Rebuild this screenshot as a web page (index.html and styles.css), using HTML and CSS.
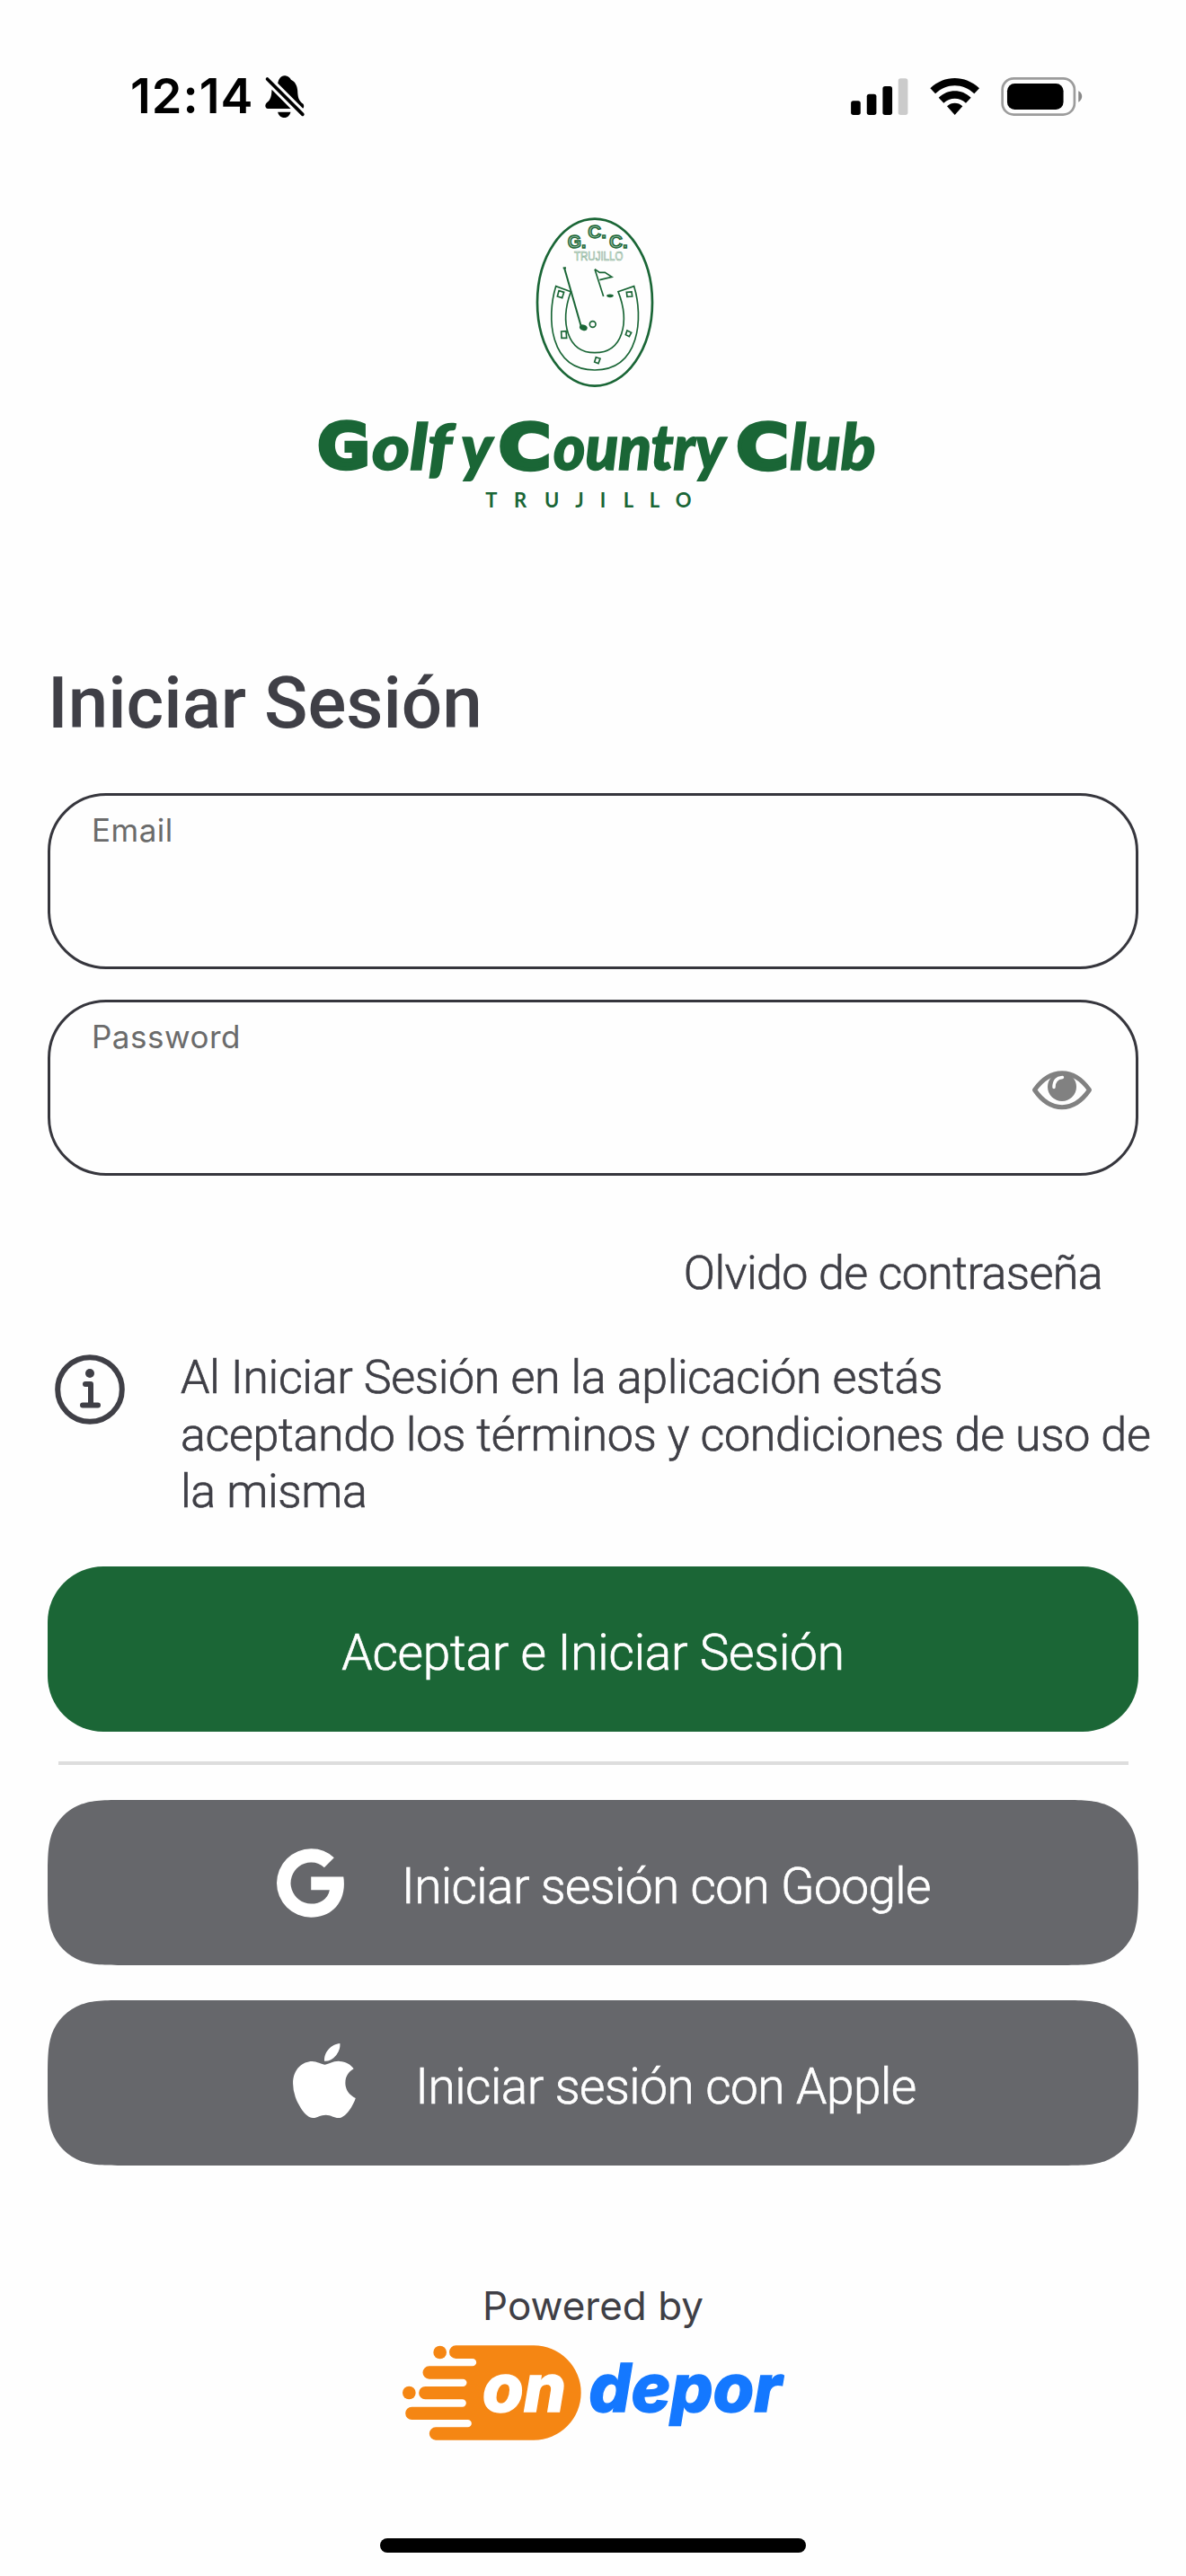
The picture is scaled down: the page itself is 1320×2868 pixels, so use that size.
FILE: index.html
```html
<!DOCTYPE html>
<html lang="es">
  <head>
    <meta charset="UTF-8" />
    <meta name="viewport" content="width=device-width, initial-scale=1.0" />
    <title>Golf y Country Club Trujillo</title>
    <link rel="stylesheet" href="styles.css">
  </head>
  <body>
    <div class="status-bar">
      <div class="status-left">
        <span class="time">12:14</span>
        <svg class="bell" viewBox="525 72 131 141">
          <path d="M567 98C570 84 577 73 589 73C601 73 607 80 611 86C625 92 632 107 633 122C634 147 637 156 652 167C655 172 655 178 651 182Z" />
          <path d="M547 119L610 183H534C523 181 523 168 532 161C543 153 546 141 547 119Z" />
          <path d="M567 194H610C607 205 600 213 589 213C577 213 569 205 567 194Z" />
          <path class="bell-slash" d="M532 84L650 202" />
        </svg>
      </div>
      <svg class="status-icons" viewBox="80 72 774 133">
        <rect x="80" y="154" width="32" height="47" rx="8" />
        <rect x="133" y="131" width="32" height="70" rx="8" />
        <rect x="186" y="105" width="32" height="96" rx="8" />
        <rect x="238" y="79" width="32" height="122" rx="8" fill="#cbcbcb" />
        <path d="M345 112C392 67 461 67 509 112L492 130C454 94 400 94 362 130Z" />
        <path d="M373 143C404 113 450 113 481 143L464 161C443 141 411 141 390 161Z" />
        <path d="M401 172C416 158 438 158 453 172L427 201Z" />
        <rect x="586" y="79" width="241" height="121" rx="38" fill="none" stroke="#9c9c9c" stroke-width="8" />
        <rect x="602" y="96" width="188" height="87" rx="25" />
        <path d="M840 121C856 128 856 150 840 158Z" fill="#888" />
      </svg>
    </div>

    <div class="club-logo">
      <svg class="emblem" viewBox="48 36 396 570">
        <ellipse cx="246" cy="320" rx="192" ry="279" stroke-width="8" />
        <g class="emblem-letters">
          <text x="155" y="139" textLength="62" lengthAdjust="spacingAndGlyphs">G.</text>
          <text x="223" y="106" textLength="62" lengthAdjust="spacingAndGlyphs">C.</text>
          <text x="294" y="139" textLength="62" lengthAdjust="spacingAndGlyphs">C.</text>
        </g>
        <text class="emblem-name" x="177" y="181" textLength="163" lengthAdjust="spacingAndGlyphs">TRUJILLO</text>
        <path d="M166 284L116 266C84 370 94 546 246 546C397 546 409 370 377 266L324 284C364 386 340 488 246 488C153 488 129 386 166 284Z" />
        <path d="M126 281L143 286L137 305L121 300ZM352 286L369 285L371 300L354 301ZM134 417L150 416L152 439L135 439ZM354 414L368 421L361 434L349 428ZM250 503L264 508L258 524L245 519Z" />
        <path d="M144 204L200 399" stroke-width="6" />
        <path d="M140 205H150" stroke-width="6" />
        <ellipse cx="208" cy="404" rx="11" ry="7" transform="rotate(20 208 404)" fill="#1a6636" />
        <circle cx="239" cy="393" r="10" stroke-width="5" />
        <path d="M246 209L275 300M246 209L262 220H280L303 235L262 245" stroke-width="5" />
        <ellipse cx="297" cy="298" rx="9" ry="3" fill="#1a6636" />
      </svg>
      <svg class="wordmark" viewBox="42 42 1866 312">
        <g class="caps">
          <text x="40" y="212" textLength="176" lengthAdjust="spacingAndGlyphs">G</text>
          <text x="644" y="216" textLength="176" lengthAdjust="spacingAndGlyphs">C</text>
          <text x="1438" y="216" textLength="176" lengthAdjust="spacingAndGlyphs">C</text>
        </g>
        <g class="script">
          <text x="222" y="218" textLength="266" lengthAdjust="spacingAndGlyphs">olf</text>
          <text x="520" y="218" textLength="104" lengthAdjust="spacingAndGlyphs">y</text>
          <text x="828" y="218" textLength="574" lengthAdjust="spacingAndGlyphs">ountry</text>
          <text x="1618" y="218" textLength="286" lengthAdjust="spacingAndGlyphs">lub</text>
        </g>
        <text class="city" x="601 696 798 901 983 1061 1148 1235" y="346">TRUJILLO</text>
      </svg>
    </div>

    <form class="login" onsubmit="return false">
      <h1>Iniciar Sesión</h1>

      <div class="field">
        <label>Email</label>
      </div>
      <div class="field">
        <label>Password</label>
        <svg class="eye" viewBox="0 0 66 43">
          <path d="M2.5 21.5C20 -3.5 46 -3.5 63.5 21.5C46 47 20 47 2.5 21.5Z" fill="none" stroke="#818181" stroke-width="5" stroke-linejoin="round" />
          <circle cx="33" cy="18" r="16" fill="#818181" />
          <path d="M24 18.5C24 11.5 27 8 33.5 7.5" fill="none" stroke="#fff" stroke-width="3.4" stroke-linecap="round" />
        </svg>
      </div>

      <a class="forgot">Olvido de contraseña</a>

      <div class="terms">
        <svg class="info" viewBox="0 0 78 78">
          <circle cx="39" cy="39" r="35.8" />
          <circle cx="39" cy="21" r="5" class="dot" />
          <path d="M34 33H40V56M31 56.5H48" />
        </svg>
        <p>
          Al Iniciar Sesión en la aplicación estás<br />
          aceptando los términos y condiciones de uso de<br />
          la misma
        </p>
      </div>

      <button class="btn accept">Aceptar e Iniciar Sesión</button>
      <hr />
      <button class="btn social google">
        <svg class="google-icon" viewBox="0 0 15.7 16">
          <path d="M15.545 6.558a9.4 9.4 0 0 1 .139 1.626c0 2.434-.87 4.492-2.384 5.885h.002C11.978 15.292 10.158 16 8 16A8 8 0 1 1 8 0a7.7 7.7 0 0 1 5.352 2.082l-2.284 2.284A4.35 4.35 0 0 0 8 3.166c-2.087 0-3.86 1.408-4.492 3.304a4.8 4.8 0 0 0 0 3.063h.003c.635 1.893 2.405 3.301 4.492 3.301 1.078 0 2.004-.276 2.722-.764h-.003a3.7 3.7 0 0 0 1.599-2.431H8v-3.08z" />
        </svg>
        <span>Iniciar sesión con Google</span>
      </button>
      <button class="btn social apple">
        <svg class="apple-icon" viewBox="4 32 377 448">
          <path d="M318.7 268.7c-.2-36.7 16.4-64.4 50-84.8-18.8-26.9-47.2-41.7-84.7-44.6-35.5-2.8-74.3 20.7-88.5 20.7-15 0-49.4-19.7-76.4-19.7C63.3 141.2 4 184.8 4 273.5q0 39.3 14.4 81.2c12.8 36.7 59 126.7 107.2 125.2 25.2-.6 43-17.9 75.8-17.9 31.8 0 48.3 17.9 76.4 17.9 48.6-.7 90.4-82.5 102.6-119.3-65.2-30.7-61.7-90-61.7-91.9zm-56.6-164.2c27.3-32.4 24.8-61.9 24-72.5-24.1 1.4-52 16.4-67.9 34.9-17.5 19.8-27.8 44.3-25.6 71.9 26.1 2 49.9-11.4 69.5-34.3z" />
        </svg>
        <span>Iniciar sesión con Apple</span>
      </button>
    </form>

    <div class="powered">
      <p>Powered by</p>
      <svg class="ondepor" viewBox="84 273 1272 318">
        <path fill="#f58613" d="M262 274H522A158 158 0 0 1 522 590H195A21 21 0 0 1 195 547H302A12.5 12.5 0 0 0 302 522H115A21 21 0 0 1 115 479H284A12.5 12.5 0 0 0 284 454H160A21 21 0 0 1 160 411H286A12.5 12.5 0 0 0 286 386H173A21 21 0 0 1 173 343H318A12.5 12.5 0 0 0 318 318H262A21 21 0 0 1 262 274Z" />
        <circle cx="209" cy="297" r="22" fill="#f58613" />
        <circle cx="106" cy="432" r="22" fill="#f58613" />
        <text x="350" y="494" fill="#fff" stroke="#fff" textLength="280" lengthAdjust="spacingAndGlyphs">on</text>
        <text x="706" y="494" fill="#1478ff" stroke="#1478ff" textLength="645" lengthAdjust="spacingAndGlyphs">depor</text>
      </svg>
    </div>

    <div class="home-indicator"></div>
  </body>
</html>
```

FILE: styles.css
```css
body {
  margin: 0;
  width: 1320px;
  height: 2868px;
  background-color: #fefefe;
  color: #3f3f46;
  font-family: Roboto, sans-serif;
  display: flex;
  flex-direction: column;
  overflow: hidden;
}

svg {
  display: block;
  flex: none;
  overflow: visible;
}

.status-bar {
  height: 214px;
  box-sizing: border-box;
  padding: 0 115px 0 145px;
  display: flex;
  align-items: center;
  justify-content: space-between;
}

.status-left {
  display: flex;
  align-items: center;
  gap: 12px;
  color: #000;
}

.time {
  font-family: Inter, sans-serif;
  font-weight: 600;
  font-size: 54px;
  line-height: 60px;
  letter-spacing: 1px;
}

.bell {
  width: 44px;
  height: 47px;
}

.bell-slash {
  fill: none;
  stroke: #000;
  stroke-width: 11;
  stroke-linecap: round;
}

.status-icons {
  width: 258px;
  height: 44.3px;
}

/* club logo */
.club-logo {
  height: 326px;
  padding: 28px 0 0 4px;
  display: flex;
  flex-direction: column;
  align-items: center;
  gap: 32px;
}

.emblem {
  width: 132px;
  height: 190px;
  fill: none;
  stroke: #1a6636;
  stroke-width: 5;
}

.emblem-letters {
  font-family: "Liberation Sans", sans-serif;
  font-weight: bold;
  font-size: 62px;
  fill: #8fb59d;
  stroke-width: 4;
}

.emblem-name {
  font-family: "Liberation Sans", sans-serif;
  font-size: 42px;
  stroke: #7fab8f;
  stroke-width: 2;
}

.wordmark {
  width: 622px;
  height: 104px;
  margin-left: 6px;
  fill: #1a6636;
}

.caps {
  font-family: "DejaVu Sans", sans-serif;
  font-weight: bold;
  font-size: 210px;
  stroke: #1a6636;
  stroke-width: 13;
}

.script {
  font-family: Lato, sans-serif;
  font-weight: 900;
  font-style: italic;
  font-size: 212px;
  stroke: #1a6636;
  stroke-width: 5;
}

.city {
  font-family: Lato, sans-serif;
  font-weight: bold;
  font-size: 66px;
}

/* login form */
.login {
  padding: 167px 53px 0;
  display: flex;
  flex-direction: column;
}

h1 {
  margin: 0 0 52px;
  font-size: 80px;
  line-height: 96px;
  font-weight: 500;
  white-space: nowrap;
}

.field {
  box-sizing: border-box;
  height: 196px;
  margin-bottom: 34px;
  padding: 17px 49px 0 46px;
  border: 3px solid #36363d;
  border-radius: 65px;
  display: flex;
  justify-content: space-between;
}

.field label {
  font-family: Inter, sans-serif;
  font-size: 35px;
  line-height: 42px;
  letter-spacing: 0.5px;
  color: #6b6b6b;
}

.eye {
  width: 66px;
  height: 43px;
  margin-top: 59px;
}

/* light weight, slightly thickened */
.forgot,
.terms p,
.btn {
  font-weight: 300;
  -webkit-text-stroke: 0.7px currentColor;
}

.forgot {
  align-self: flex-end;
  margin: 43px 40px 0 0;
  font-size: 52px;
  line-height: 64px;
  letter-spacing: -0.6px;
}

.terms {
  display: flex;
  align-items: flex-start;
  gap: 62px;
  margin: 52px -53px 0 8px;
}

.info {
  width: 78px;
  height: 78px;
  margin-top: 6px;
  fill: none;
  stroke: #3f3f46;
  stroke-width: 6;
  stroke-linecap: round;
  stroke-linejoin: round;
}

.info .dot {
  fill: #3f3f46;
  stroke: none;
}

.terms p {
  margin: 0;
  font-size: 52px;
  line-height: 63.5px;
  letter-spacing: -0.35px;
  white-space: nowrap;
}

.btn {
  height: 184px;
  border: 0;
  padding: 8px 0 0;
  color: #fff;
  font-family: Roboto, sans-serif;
  font-size: 55px;
  letter-spacing: -0.2px;
  display: flex;
  align-items: center;
  justify-content: center;
}

.accept {
  margin-top: 51.5px;
  border-radius: 62px;
  background-color: #1b6636;
}

hr {
  width: 1191px;
  height: 4px;
  margin: 33px auto 39px;
  border: 0;
  background-color: #ddd;
}

/* continuous corners */
.social {
  background-color: #66676b;
  letter-spacing: -0.6px;
  clip-path: path("M91.7 0H1122.3C1148.7 0 1161.9 0 1173.8 3.9L1176.1 4.5C1191.6 10.1 1203.9 22.4 1209.5 37.9C1214 52.1 1214 65.3 1214 92C1214 118.7 1214 131.9 1209.5 146.1C1203.9 161.6 1191.6 173.9 1176.1 179.5L1173.8 180.1C1161.9 184 1148.7 184 1122.3 184H91.7C65.3 184 52.1 184 40.2 180.1L37.9 179.5C22.4 173.9 10.1 161.6 4.5 146.1C0 131.9 0 118.7 0 92C0 65.3 0 52.1 4.5 37.9C10.1 22.4 22.4 10.1 37.9 4.5L40.2 3.9C52.1 0 65.3 0 91.7 0Z");
}

.social svg {
  fill: #fff;
  margin-top: -8px;
}

.google {
  gap: 64px;
  margin-bottom: 39px;
  padding-left: 24px;
}

.google-icon {
  width: 75px;
  height: 77px;
}

.apple {
  gap: 66px;
  padding-left: 26px;
  letter-spacing: -0.5px;
}

.apple .apple-icon {
  width: 70px;
  height: 83px;
  margin-top: -14px;
}

/* footer */
.powered {
  margin-top: 129px;
  display: flex;
  flex-direction: column;
  align-items: center;
}

.powered p {
  margin: 0 0 17px;
  font-family: Inter, sans-serif;
  font-size: 44px;
  line-height: 54px;
}

.ondepor {
  width: 424px;
  height: 106px;
  font-family: Inter, sans-serif;
  font-weight: 800;
  font-style: italic;
  font-size: 222px;
  stroke-width: 4;
}

.home-indicator {
  width: 474px;
  height: 16px;
  margin: auto auto 26px;
  border-radius: 8px;
  background-color: #000;
}
```
